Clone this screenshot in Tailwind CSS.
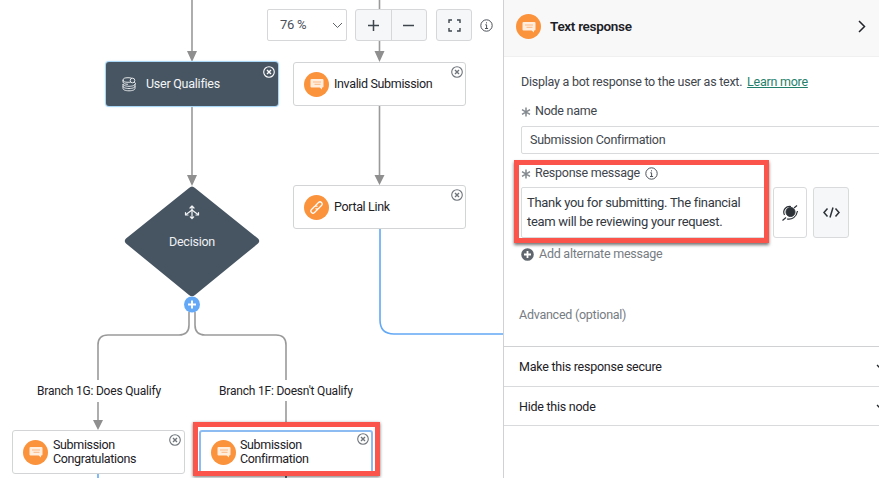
<!DOCTYPE html>
<html><head><meta charset="utf-8"><script src="https://cdn.jsdelivr.net/npm/@tailwindcss/browser@4"></script></head>
<body class="m-0 bg-white">
<div class="flex w-[879px] h-[478px] overflow-hidden bg-white font-['Roboto',sans-serif] text-[12.5px] tracking-[-0.25px] text-[#22262a]">
  <!-- canvas -->
  <div class="relative w-[503px] h-[478px] shrink-0 overflow-hidden">
    <svg class="absolute left-0 top-0" width="503" height="478" fill="none">
      <g stroke="#9a9a9a" stroke-width="1.6">
        <path d="M192 0V52M192 105V176M379.500 0V9M379.500 41V52M379.500 105V176"/>
        <path d="M189 312V325Q189 335 179 335H108Q98 335 98 345V380M98 402V422"/>
        <path d="M195 312V325Q195 335 205 335H276Q286 335 286 345V380M286 400V422"/>
      </g>
      <g fill="#8f8f8f"><path d="M187 51h10l-5 11zM374.500 51h10l-5 11zM374.500 175h10l-5 10zM187 175h10l-5 11zM93 420h10l-5 10z"/></g>
      <path d="M380 228V320Q380 334 394 334H503" stroke="#62a8f5" stroke-width="1.6"/>
      <path d="M98 473V478" stroke="#62a8f5" stroke-width="1.6"/>
      <path d="M286 476V478" stroke="#3c4652" stroke-width="1.6"/>
      <path d="M192 186.500 Q193.500 186.500 195 188L258 238.500Q260.500 241 258 243.500L195 295Q192 297.500 189 295L126 243.500Q123.500 241 126 238.500L189 188Q190.500 186.500 192 186.500Z" fill="#475563"/>
      <g fill="none" stroke="#f2f4f5" stroke-width="1.200" stroke-linecap="round" stroke-linejoin="round">
        <path d="M192 206V218.500M190 208L192 206L194 208M190.300 216.800L192 218.500L193.700 216.800"/>
        <path d="M192 210L186 214.500M192 210L198 214.500"/>
        <path d="M185.500 212.500V215H188M198.500 212.500V215H196"/>
      </g>
      <circle cx="192" cy="304.500" r="8" fill="#64a9f7"/>
      <path d="M188 304.500h8M192 300.500v8" stroke="#fff" stroke-width="2"/>
    </svg>

    <!-- zoom controls -->
    <div class="absolute left-[267px] top-[9px] flex h-[32px] w-[80px] items-center justify-between rounded-[2px] border border-[#d5d7d9] bg-white pl-[12px] pr-[3px] text-[13px] text-[#4a5159]">
      <span>76 %</span>
      <svg width="11" height="7" fill="none" stroke="#5c636a" stroke-width="1"><path d="M1 1l4.500 4.500L10 1"/></svg>
    </div>
    <div class="absolute left-[355px] top-[9px] flex h-[32px] w-[72px] rounded-[3px] border border-[#d5d7d9] bg-[#f6f7f8]">
      <div class="flex flex-1 items-center justify-center border-r border-[#d5d7d9]"><svg width="13" height="13" stroke="#3e454d" stroke-width="1.500"><path d="M6.500 1v11M1 6.500h11"/></svg></div>
      <div class="flex flex-1 items-center justify-center"><svg width="13" height="13" stroke="#3e454d" stroke-width="1.500"><path d="M1 6.500h11"/></svg></div>
    </div>
    <div class="absolute left-[436px] top-[9px] flex h-[32px] w-[36px] items-center justify-center rounded-[3px] border border-[#d5d7d9] bg-[#f6f7f8]">
      <svg width="13" height="13" fill="none" stroke="#3e454d" stroke-width="1.400"><path d="M1 4V1h3M9 1h3v3M12 9v3H9M4 12H1V9"/></svg>
    </div>
    <svg class="absolute left-[480px] top-[19px]" width="13" height="13" fill="none" stroke="#4b5259"><circle cx="6.500" cy="6.500" r="5.700"/><path d="M5.300 5.800h1.300v3.600M5 9.500h3.100M6.500 3.300v1.100"/></svg>

    <!-- User Qualifies -->
    <div class="absolute left-[106px] top-[62px] flex h-[44px] w-[172px] items-center rounded-[3px] bg-[#475563] pl-[16px] text-[#f4f5f6] shadow-[0_0_0_1px_#a9d6f5,0_0_3px_#a9d6f5]">
      <svg width="15" height="16" fill="none" stroke="#f2f4f5" stroke-width="0.900"><ellipse cx="6" cy="4" rx="5" ry="2.300"/><circle cx="10.500" cy="4.500" r="2.300" fill="#475563"/><path d="M12.200 6.200l1.800 1.600"/><path d="M1 4v2c0 1.300 2 2.300 5 2.300M1 8c0 1.300 2.300 2.300 6 2.300s6-1 6-2.300M1 8v2.200c0 1.300 2.300 2.300 6 2.300s6-1 6-2.300V8M1 10.200v2.300c0 1.300 2.300 2.300 6 2.300s6-1 6-2.300v-2.300"/></svg>
      <span class="ml-[9px]">User Qualifies</span>
      <svg class="absolute right-[3px] top-[4px]" width="12" height="12" fill="none" stroke="#fff" stroke-width="1.100"><circle cx="6" cy="6" r="5.300"/><path d="M4 4l4 4M8 4l-4 4" stroke-width="1.400"/></svg>
    </div>

    <!-- Invalid Submission -->
    <div class="absolute left-[293px] top-[62px] flex h-[44px] w-[173px] items-center rounded-[3px] border border-[#d2d4d6] bg-white pl-[10px]">
      <div class="flex size-[25px] shrink-0 items-center justify-center rounded-full bg-[#fb923c]">
        <svg width="14" height="12"><path d="M1.500 1h11a1 1 0 0 1 1 1v6.500a1 1 0 0 1-1 1H12v2l-2.300-2H1.500a1 1 0 0 1-1-1V2a1 1 0 0 1 1-1z" fill="#ffeede"/><path d="M3 4h8M4.500 6.300h6" stroke="#fbb883"/></svg>
      </div>
      <span class="ml-[5px] tracking-[-0.35px] text-[#1d2126]">Invalid Submission</span>
      <svg class="absolute right-[2px] top-[3px]" width="12" height="12" fill="none" stroke="#6f757b" stroke-width="1.100"><circle cx="6" cy="6" r="5.300"/><path d="M4 4l4 4M8 4l-4 4" stroke-width="1.400"/></svg>
    </div>

    <!-- Portal Link -->
    <div class="absolute left-[293px] top-[185px] flex h-[44px] w-[173px] items-center rounded-[3px] border border-[#d2d4d6] bg-white pl-[10px]">
      <div class="flex size-[25px] shrink-0 items-center justify-center rounded-full bg-[#fb923c]">
        <svg width="15" height="15" fill="none" stroke="#fff" stroke-width="1.200" stroke-linecap="round"><path d="M6.500 5.500l3-3a2.100 2.100 0 0 1 3 3l-3 3a2.100 2.100 0 0 1-2.600.3"/><path d="M8.500 9.500l-3 3a2.100 2.100 0 0 1-3-3l3-3a2.100 2.100 0 0 1 2.600-.3"/></svg>
      </div>
      <span class="ml-[5px] tracking-[-0.35px] text-[#1d2126]">Portal Link</span>
      <svg class="absolute right-[2px] top-[3px]" width="12" height="12" fill="none" stroke="#6f757b" stroke-width="1.100"><circle cx="6" cy="6" r="5.300"/><path d="M4 4l4 4M8 4l-4 4" stroke-width="1.400"/></svg>
    </div>

    <div class="absolute left-[132px] top-[233px] w-[120px] text-center text-[#eef0f2]">Decision</div>

    <div class="absolute left-[37px] top-[381px] whitespace-nowrap bg-white py-[1px] text-[12px] tracking-[-0.2px] text-[#1d2126]">Branch 1G: Does Qualify</div>
    <div class="absolute left-[219px] top-[381px] whitespace-nowrap bg-white py-[1px] text-[12px] tracking-[-0.2px] text-[#1d2126]">Branch 1F: Doesn't Qualify</div>

    <!-- Congratulations -->
    <div class="absolute left-[12px] top-[430px] flex h-[44px] w-[173px] items-center rounded-[3px] border border-[#d2d4d6] bg-white pl-[10px]">
      <div class="flex size-[25px] shrink-0 items-center justify-center rounded-full bg-[#fb923c]">
        <svg width="14" height="12"><path d="M1.500 1h11a1 1 0 0 1 1 1v6.500a1 1 0 0 1-1 1H12v2l-2.300-2H1.500a1 1 0 0 1-1-1V2a1 1 0 0 1 1-1z" fill="#ffeede"/><path d="M3 4h8M4.500 6.300h6" stroke="#fbb883"/></svg>
      </div>
      <span class="ml-[5px] pb-[1px] leading-[13.500px] tracking-[-0.35px] text-[#1d2126]">Submission<br>Congratulations</span>
      <svg class="absolute right-[3px] top-[3px]" width="12" height="12" fill="none" stroke="#6f757b" stroke-width="1.100"><circle cx="6" cy="6" r="5.300"/><path d="M4 4l4 4M8 4l-4 4" stroke-width="1.400"/></svg>
    </div>

    <!-- Confirmation -->
    <div class="absolute left-[199px] top-[430px] flex h-[44px] w-[174px] items-center rounded-[3px] border-2 border-[#8dbcf2] bg-white pl-[10px]">
      <div class="flex size-[25px] shrink-0 items-center justify-center rounded-full bg-[#fb923c]">
        <svg width="14" height="12"><path d="M1.500 1h11a1 1 0 0 1 1 1v6.500a1 1 0 0 1-1 1H12v2l-2.300-2H1.500a1 1 0 0 1-1-1V2a1 1 0 0 1 1-1z" fill="#ffeede"/><path d="M3 4h8M4.500 6.300h6" stroke="#fbb883"/></svg>
      </div>
      <span class="ml-[4px] pb-[1px] leading-[13.500px] tracking-[-0.35px] text-[#1d2126]">Submission<br>Confirmation</span>
      <svg class="absolute right-[2px] top-[1px]" width="12" height="12" fill="none" stroke="#6f757b" stroke-width="1.100"><circle cx="6" cy="6" r="5.300"/><path d="M4 4l4 4M8 4l-4 4" stroke-width="1.400"/></svg>
    </div>
    <div class="absolute left-[193px] top-[422px] h-[54px] w-[187px] border-[5px] border-[#fb554b] shadow-[0_1px_3px_rgba(0,0,0,0.55)]"></div>
  </div>

  <!-- panel -->
  <div class="relative flex h-[478px] w-[376px] shrink-0 flex-col overflow-hidden border-l border-[#cfd1d3] bg-white">
    <div class="flex h-[57px] shrink-0 items-center border-b border-[#f0f0f0] bg-[#f8f8f8] pb-[3px] pl-[12px] pr-[13px]">
      <div class="flex size-[25px] shrink-0 items-center justify-center rounded-full bg-[#fb923c]">
        <svg width="14" height="12"><path d="M1.500 1h11a1 1 0 0 1 1 1v6.500a1 1 0 0 1-1 1H12v2l-2.300-2H1.500a1 1 0 0 1-1-1V2a1 1 0 0 1 1-1z" fill="#ffeede"/><path d="M3 4h8M4.500 6.300h6" stroke="#fbb883"/></svg>
      </div>
      <span class="ml-[9px] flex-1 text-[13.500px] font-semibold tracking-[-0.3px] text-[#1d2126]">Text response</span>
      <svg width="8" height="13" fill="none" stroke="#22262a" stroke-width="1.500"><path d="M1 1l5.500 5.500L1 12"/></svg>
    </div>
    <div class="flex flex-col pl-[17px]">
      <p class="mt-[15px] whitespace-nowrap leading-[20px] text-[#3f464d]">Display a bot response to the user as text. <span class="ml-[2px] text-[#1f7f6b] underline">Learn more</span></p>
      <label class="mt-[9px] flex h-[20px] items-center text-[#3f464d]"><svg class="mr-[4px] mt-[2px]" width="10" height="10" stroke="#83898f" stroke-width="1.500"><path d="M5 .5v9M1 2.700l8 4.600M9 2.700L1 7.300"/></svg>Node name</label>
      <div class="mt-[5px] flex h-[28px] w-[380px] items-center rounded-[2px] border border-[#d8dadc] pl-[8px] text-[#3f464d]">Submission Confirmation</div>
      <label class="mt-[9px] flex h-[20px] items-center text-[#3f464d]"><svg class="mr-[4px] mt-[2px]" width="10" height="10" stroke="#83898f" stroke-width="1.500"><path d="M5 .5v9M1 2.700l8 4.600M9 2.700L1 7.300"/></svg>Response message
        <svg class="ml-[5px]" width="13" height="13" fill="none" stroke="#4b5259"><circle cx="6.500" cy="6.500" r="5.700"/><path d="M5.300 5.800h1.300v3.600M5 9.500h3.100M6.500 3.300v1.100"/></svg></label>
      <div class="mt-[4px] flex h-[51px] gap-[6px]">
        <div class="w-[246px] rounded-[2px] border border-[#d8dadc] py-[5px] pl-[5px] text-[13px] leading-[19px] tracking-[-0.3px] text-[#33393f]">Thank you for submitting. The financial<br>team will be reviewing your request.</div>
        <div class="flex w-[34px] items-center justify-center rounded-[3px] border border-[#d8dadc] bg-white">
          <svg width="18" height="18" fill="none" stroke="#2c3238"><circle cx="9.500" cy="8" r="4.500" fill="#2c3238"/><path d="M3.500 11C1 6 5.500 1.500 10 2.500M6 15c5 1 9.500-2 10.500-8M1.500 16.500L5 13.500M13 4l3-2.500" stroke-width="1.200"/></svg>
        </div>
        <div class="flex w-[36px] items-center justify-center rounded-[3px] border border-[#d8dadc] bg-[#f6f7f8]">
          <svg width="17" height="11" fill="none" stroke="#2c3238" stroke-width="1.500"><path d="M4.500 1.500L1 5.500l3.500 4M12.500 1.500l3.500 4-3.500 4M10 .5L7 10.500"/></svg>
        </div>
      </div>
      <div class="mt-[5px] flex h-[22px] items-center text-[#767c82]">
        <svg class="mr-[5px]" width="13" height="13"><circle cx="6.500" cy="6.500" r="6.300" fill="#5f666d"/><path d="M6.500 3v7M3 6.500h7" stroke="#fff" stroke-width="1.800"/></svg>Add alternate message
      </div>
      <div class="ml-[-2px] mt-[40px] flex h-[20px] items-center text-[#767c82]">Advanced (optional)</div>
    </div>
    <div class="mt-[21px] border-t border-[#cfd1d3]">
      <div class="flex h-[39px] items-center justify-between pl-[15px] pt-[1px] text-[#1d2126]"><span>Make this response secure</span><svg class="mr-[-5px]" width="8" height="6" fill="none" stroke="#22262a" stroke-width="1.300"><path d="M1 1l3 3 3-3"/></svg></div>
      <div class="flex h-[39px] items-center justify-between border-t border-[#d8dadc] pl-[15px] pt-[2px] text-[#1d2126]"><span>Hide this node</span><svg class="mr-[-5px]" width="8" height="6" fill="none" stroke="#22262a" stroke-width="1.300"><path d="M1 1l3 3 3-3"/></svg></div>
      <div class="border-t border-[#d8dadc]"></div>
    </div>
    <div class="absolute left-[10px] top-[160px] h-[83px] w-[255px] border-[5px] border-[#fb554b] shadow-[0_2px_3px_rgba(0,0,0,0.55)]"></div>
  </div>
</div>
</body></html>
